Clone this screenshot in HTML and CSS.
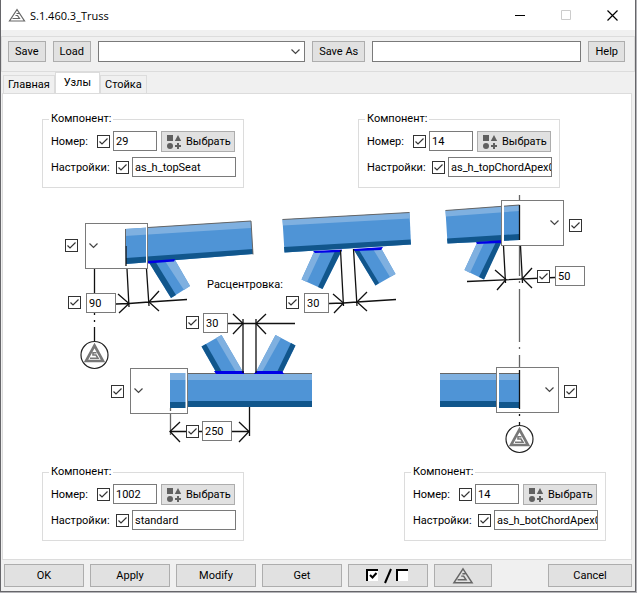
FILE: index.html
```html
<!DOCTYPE html>
<html lang="ru">

<head>
  <meta charset="UTF-8">
  <meta name="viewport" content="width=device-width, initial-scale=1.0">
  <title>S.1.460.3_Truss</title>
  <link rel="stylesheet" href="styles.css">
</head>

<body>
  <svg class="defs" aria-hidden="true">
    <symbol id="logo" viewBox="0 0 18 14">
      <path d="M9 1.5 L16.5 13 H1.5 Z M4.500 10.500 H11.5 L9.5 7.500 H7.500 M8.500 5.500 H11" fill="none" stroke="#666" stroke-width="1.2" />
    </symbol>
    <symbol id="shapes" viewBox="0 0 16 15">
      <path d="M1 1 H7 V7 H1 Z M12 1 L15.2 7 H8.8 Z M11 9 H13 V11 H15 V13 H13 V15 H11 V13 H9 V11 H11 Z" fill="#606060" />
      <circle cx="4" cy="12" r="3" fill="#606060" />
    </symbol>
    <symbol id="axis" viewBox="0 0 30 30">
      <circle cx="15" cy="15" r="13.5" fill="#fff" stroke="#222" stroke-width="1.2" />
      <path d="M15 5.5 L23.5 21 H6.5 Z" fill="none" stroke="#787878" stroke-width="2.6" />
      <path d="M10.5 18.3 H18.5 L16.5 15 H13.5 V12.8 H17" fill="none" stroke="#787878" stroke-width="1.6" />
    </symbol>
  </svg>

  <div class="window">
    <header class="titlebar">
      <svg class="title-icon"><use href="#logo" /></svg>
      <h1>S.1.460.3_Truss</h1>
      <button class="win-button" aria-label="Minimize"><svg width="11" height="11"><path d="M0 5.5 H10" stroke="#000" /></svg></button>
      <button class="win-button" aria-label="Maximize" disabled><svg width="11" height="11"><path d="M.5 .5 H9.5 V9.5 H.5 Z" fill="none" stroke="#ccc" /></svg></button>
      <button class="win-button" aria-label="Close"><svg width="11" height="11"><path d="M.5 .5 L10.5 10.5 M10.5 .5 L.5 10.5" stroke="#000" stroke-width="1.2" /></svg></button>
    </header>

    <div class="toolbar">
      <button>Save</button>
      <button>Load</button>
      <select class="combo" aria-label="Saved settings"><option></option></select>
      <button>Save As</button>
      <input type="text" class="save-name" aria-label="Save as name">
      <button>Help</button>
    </div>

    <div class="tabs" role="tablist">
      <button role="tab">Главная</button>
      <button role="tab" class="active" aria-selected="true">Узлы</button>
      <button role="tab">Стойка</button>
    </div>

    <main class="panel">
      <div class="components top">
        <fieldset>
          <legend>Компонент:</legend>
          <div class="row">
            <label class="number" for="num1">Номер:</label>
            <input type="checkbox" checked aria-label="Номер">
            <input type="text" class="short" id="num1" value="29">
            <button class="pick"><svg><use href="#shapes" /></svg>Выбрать</button>
          </div>
          <div class="row">
            <label class="settings" for="set1">Настройки:</label>
            <input type="checkbox" checked aria-label="Настройки">
            <input type="text" class="long" id="set1" value="as_h_topSeat">
          </div>
        </fieldset>
        <fieldset>
          <legend>Компонент:</legend>
          <div class="row">
            <label class="number" for="num2">Номер:</label>
            <input type="checkbox" checked aria-label="Номер">
            <input type="text" class="short" id="num2" value="14">
            <button class="pick"><svg><use href="#shapes" /></svg>Выбрать</button>
          </div>
          <div class="row">
            <label class="settings" for="set2">Настройки:</label>
            <input type="checkbox" checked aria-label="Настройки">
            <input type="text" class="long" id="set2" value="as_h_topChordApex01">
          </div>
        </fieldset>
      </div>

      <div class="diagram">
        <svg class="drawing" width="540" height="270" viewBox="60 190 540 270">
          <!-- top chord, support end -->
          <g class="steel">
            <path class="mid" d="M148 261 L171 298 L190 286 L175 260 Z" />
            <path class="light" d="M165 261 L184 290 L190 286 L175 260 Z" />
            <path class="dark" d="M148 261 L171 298 L176 295 L155 261 Z" />
            <path class="mid" d="M125 229 L251 221 L253 254 L126 264 Z" />
            <path class="light" d="M125 229 L251 221 L251 228 L125 236 Z" />
            <path class="dark" d="M126 258 L253 249 L253 254 L126 264 Z" />
            <path class="edge" d="M148 227.5 L251 221 L253 254.5" />
            <path class="weld" d="M148 261 L175 259 L174 261.5 L148 263.5 Z" />
          </g>
          <path class="gap" d="M147 224 V268" />
          <path class="edge" d="M125.500 229 V246" />
          <path class="line" d="M126 246 V266" />
          <path class="line" d="M94.500 269 V315 M94.500 320 V322 M94.500 327 V342" />
          <path class="line" d="M127 269 L129 307 M146.500 269 L149 306 M116 304 L129 303.500 L149 302 L187 299.500" />
          <path class="line" d="M118 294 L129 303.500 L119 313 M159 291 L149 302 L159 311" />
          <use href="#axis" x="79.500" y="340" width="30" height="30" />

          <!-- top chord, middle joint -->
          <g class="steel">
            <path class="mid" d="M314 252 L342 250 L322.500 289 L301.500 279.500 Z" />
            <path class="light" d="M314 252 L321 252 L307 282 L301.500 279.500 Z" />
            <path class="dark" d="M335 251 L342 250 L322.500 289 L318 287 Z" />
            <path class="mid" d="M354 250 L381.500 249 L395.500 274 L375.500 285.500 Z" />
            <path class="light" d="M373 249 L381.500 249 L395.500 274 L390 277 Z" />
            <path class="dark" d="M354 250 L359 250 L379 283 L375.500 285.500 Z" />
            <path class="mid" d="M282.500 219.500 L409.500 212.500 L411 244.500 L284.500 252.500 Z" />
            <path class="light" d="M282.500 219.500 L409.500 212.500 L410 218.500 L283 225.500 Z" />
            <path class="dark" d="M284 247 L410.500 239.500 L411 244.500 L284.500 252.500 Z" />
            <path class="edge" d="M282.500 219.500 L409.500 212.500" />
            <path class="weld" d="M313 251 L342 249.500 L341 252 L315 253 Z" />
            <path class="weld" d="M353 249 L383 247 L381 250 L355 251 Z" />
          </g>
          <path class="line" d="M340.500 250 L343.500 306 M353.500 249 L357 306 M329 303.500 L343.500 303 L357 302 L396 299.500" />
          <path class="line" d="M333 294 L343.500 303 L334 313 M367 292 L357 302 L367 311" />

          <!-- top chord, ridge -->
          <g class="steel">
            <path class="mid" d="M477 243 L501 241 L484 279.500 L464.500 270 Z" />
            <path class="light" d="M477 243 L484 243 L470 273 L464.500 270 Z" />
            <path class="dark" d="M496 242 L502 241 L484 279.500 L479 277 Z" />
            <path class="mid" d="M445.500 210.500 L519.500 205 V240 L447.500 243.500 Z" />
            <path class="light" d="M445.500 210.500 L519.500 205 V211 L446 216.500 Z" />
            <path class="dark" d="M447 238.500 L519.500 234 V240 L447.500 243.500 Z" />
            <path class="edge" d="M445.500 210.500 L519.500 205" />
            <path class="weld" d="M476 242 L504 240 L501 243 L477 244 Z" />
          </g>
          <path class="gap" d="M503 201 V245" />
          <path class="line gray" d="M519.500 195 V200 M519.500 246 V276 M519.500 281 V283 M519.500 289 V342 M519.500 347 V349 M519.500 355 V367" />
          <path class="line" d="M519.500 205 V240" />
          <path class="line" d="M503.500 246 L505.500 283 M520.500 246 L522.500 283 M467 281.500 L555 277.500" />
          <path class="line" d="M495 270 L506 279.500 L497 290 M532 268 L522.500 278.500 L532 288" />

          <!-- bottom chord, middle joint -->
          <g class="steel">
            <path class="mid" d="M201.500 346.500 L221.500 335 L243 372 H216 Z" />
            <path class="light" d="M216 338 L221.500 335 L243 372 H236 Z" />
            <path class="dark" d="M201.500 346.500 L206 344 L222 372 H216 Z" />
            <path class="mid" d="M256 372 L275.500 335 L295.500 345.500 L282.500 372 Z" />
            <path class="light" d="M256 372 L275.500 335 L281 338 L262 372 Z" />
            <path class="dark" d="M277 372 L291 343 L295.500 345.500 L282.500 372 Z" />
            <path class="mid" d="M170 373 H312 V406 H170 Z" />
            <path class="light" d="M170 373 H312 V380 H170 Z" />
            <path class="dark" d="M170 402 H187 V408 H170 Z M187 401 H312 V407 H187 Z" />
            <path class="edge" d="M188 373.500 H312" />
            <path class="weld" d="M214 371 H244 V374 H216 Z M254 374 L256 371 H282 L284 374 Z" />
          </g>
          <path class="gap" d="M186.500 369 V413" />
          <path class="line" d="M243 319 V373 M256 319 V373 M228 323.500 H295" />
          <path class="line" d="M233 314 L243 323.500 L233 334 M266 314 L256 323.500 L266 334" />
          <path class="line gray" d="M170.500 408 V411 M170.500 414 V435" />
          <path class="line" d="M249.500 407 V436 M170 431.500 H249" />
          <path class="line" d="M180 422 L170 431.500 L180 442 M239 422 L249 431.500 L239 442" />

          <!-- bottom chord, ridge -->
          <g class="steel">
            <path class="mid" d="M440 373 H519 V407 H440 Z" />
            <path class="light" d="M440 373 H519 V380 H440 Z" />
            <path class="dark" d="M440 401 H498 V407 H440 Z M498 402 H519 V408 H498 Z" />
            <path class="edge" d="M440 373.500 H519" />
          </g>
          <path class="gap" d="M498 368 V413" />
          <path class="line" d="M519.500 370 V409 M519.500 414 V416 M519.500 422 V426" />
          <use href="#axis" x="504.500" y="424" width="30" height="30" />
        </svg>

        <input type="checkbox" checked class="node seat-check" aria-label="Опорный торец">
        <select class="combo node seat" aria-label="Опорный торец"><option></option></select>
        <input type="checkbox" checked class="node seat-gap-check" aria-label="Отступ опоры">
        <input type="text" class="node seat-gap" value="90" aria-label="Отступ опоры">

        <label class="node offset-label" for="offset">Расцентровка:</label>
        <input type="checkbox" checked class="node offset-check" aria-label="Расцентровка">
        <input type="text" class="node narrow offset" id="offset" value="30">

        <select class="combo arrow-right node ridge" aria-label="Верхний конёк"><option></option></select>
        <input type="checkbox" checked class="node ridge-check" aria-label="Верхний конёк">
        <input type="checkbox" checked class="node ridge-gap-check" aria-label="Отступ конька">
        <input type="text" class="node ridge-gap" value="50" aria-label="Отступ конька">

        <input type="checkbox" checked class="node bottom-gap-check" aria-label="Зазор раскосов">
        <input type="text" class="node narrow bottom-gap" value="30" aria-label="Зазор раскосов">
        <input type="checkbox" checked class="node bottom-check" aria-label="Нижний пояс">
        <select class="combo node bottom" aria-label="Нижний пояс"><option></option></select>
        <input type="checkbox" checked class="node length-check" aria-label="Длина">
        <input type="text" class="node length" value="250" aria-label="Длина">

        <select class="combo arrow-right node bottom-ridge" aria-label="Нижний конёк"><option></option></select>
        <input type="checkbox" checked class="node bottom-ridge-check" aria-label="Нижний конёк">
      </div>

      <div class="components">
        <fieldset>
          <legend>Компонент:</legend>
          <div class="row">
            <label class="number" for="num3">Номер:</label>
            <input type="checkbox" checked aria-label="Номер">
            <input type="text" class="short" id="num3" value="1002">
            <button class="pick"><svg><use href="#shapes" /></svg>Выбрать</button>
          </div>
          <div class="row">
            <label class="settings" for="set3">Настройки:</label>
            <input type="checkbox" checked aria-label="Настройки">
            <input type="text" class="long" id="set3" value="standard">
          </div>
        </fieldset>
        <fieldset>
          <legend>Компонент:</legend>
          <div class="row">
            <label class="number" for="num4">Номер:</label>
            <input type="checkbox" checked aria-label="Номер">
            <input type="text" class="short" id="num4" value="14">
            <button class="pick"><svg><use href="#shapes" /></svg>Выбрать</button>
          </div>
          <div class="row">
            <label class="settings" for="set4">Настройки:</label>
            <input type="checkbox" checked aria-label="Настройки">
            <input type="text" class="long" id="set4" value="as_h_botChordApex01">
          </div>
        </fieldset>
      </div>
    </main>

    <footer class="footer">
      <button>OK</button>
      <button>Apply</button>
      <button>Modify</button>
      <button>Get</button>
      <button aria-label="Toggle all">
        <svg width="44" height="16">
          <path d="M1 13 V2 H12 M31 13 V2 H42" fill="none" stroke="#000" stroke-width="2" />
          <path d="M2 3 H12 V13 H2 Z M32 3 H42 V13 H32 Z" fill="#fff" />
          <path d="M4 7 L6.500 9.500 L10.500 5" fill="none" stroke="#000" stroke-width="2" />
          <path d="M19 15 L25 1" stroke="#000" stroke-width="2" />
        </svg>
      </button>
      <button class="logo-button" aria-label="Tekla"><svg width="22" height="17"><use href="#logo" /></svg></button>
      <button class="cancel">Cancel</button>
    </footer>
  </div>
</body>

</html>
```
FILE: styles.css
```css
* {
  box-sizing: border-box;
}

body {
  margin: 0;
  background-color: #b4b4b8;
  font-family: Roboto, "Liberation Sans", sans-serif;
  font-size: 11px;
  color: #000;
}

button,
input,
select {
  margin: 0;
  font: inherit;
  color: inherit;
}

button {
  height: 21px;
  padding: 0;
  background-color: #e1e1e1;
  border: 1px solid #adadad;
}

button:hover {
  background-color: #e5f1fb;
}

svg {
  display: block;
  flex: none;
}

.defs {
  position: absolute;
  width: 0;
  height: 0;
}

.window {
  display: flex;
  flex-direction: column;
  min-height: calc(100vh - 1px);
  margin-right: 1px;
  background-color: #f0f0f0;
  border: solid #66666a;
  border-width: 0 1px 1px;
}

/* title bar */
.titlebar {
  display: flex;
  align-items: center;
  height: 30px;
  padding-left: 7px;
  background-color: #fff;
}

.title-icon {
  width: 18px;
  height: 14px;
}

.titlebar h1 {
  flex: 1;
  margin: 0 0 0 4px;
  font-family: "Open Sans", sans-serif;
  font-size: 11px;
  font-weight: normal;
}

.win-button {
  display: flex;
  align-items: center;
  justify-content: center;
  width: 46px;
  height: 30px;
  background: none;
  border: none;
}

/* toolbar */
.toolbar {
  display: flex;
  align-items: center;
  gap: 7px;
  height: 36px;
  margin-top: 6px;
  padding: 0 9px 5px 6px;
  border: 1px solid #dcdcdc;
}

.toolbar button {
  padding: 0 6px;
}

.toolbar .combo,
.toolbar .save-name {
  flex: 1;
  min-width: 0;
  height: 21px;
}

input[type="text"] {
  width: 30px;
  height: 20px;
  padding: 0 0 0 2px;
  background-color: #fff;
  border: 1px solid #7a7a7a;
}

.combo {
  appearance: none;
  background: #fff url("data:image/svg+xml,%3Csvg xmlns='http://www.w3.org/2000/svg' width='9' height='6'%3E%3Cpath d='M.5 .5 L4.500 4.500 L8.500 .5' fill='none' stroke='%23444' stroke-width='1.2'/%3E%3C/svg%3E") no-repeat right 4px center;
  border: 1px solid #7a7a7a;
  border-radius: 0;
}

input[type="checkbox"] {
  flex: none;
  appearance: none;
  width: 13px;
  height: 13px;
  background-color: #fff;
  border: 1px solid #333;
}

input[type="checkbox"]:checked {
  background-image: url("data:image/svg+xml,%3Csvg xmlns='http://www.w3.org/2000/svg' width='11' height='11'%3E%3Cpath d='M1.500 5.500 L4 8 L9.500 2.500' fill='none' stroke='%23333' stroke-width='1.2'/%3E%3C/svg%3E");
}

/* tabs */
.tabs {
  display: flex;
  align-items: flex-end;
  height: 21px;
  padding-left: 2px;
}

.tabs button {
  height: 18px;
  padding: 0 4px;
  background-color: #f0f0f0;
  border: 1px solid #dcdcdc;
  border-bottom: none;
}

.tabs .active {
  height: 21px;
  padding: 0 8px 2px;
  background-color: #fff;
}

.panel {
  flex: 1;
  margin: 0 3px 0 1px;
  padding: 18px 25px 12px 39px;
  background-color: #fff;
  border: 1px solid #dcdcdc;
}

/* component groups */
.components {
  display: flex;
  justify-content: space-between;
}

.components.top {
  padding-right: 46px;
}

fieldset {
  width: 202px;
  height: 76px;
  margin: 0;
  padding: 2px 7px 0 8px;
  border: 1px solid #dcdcdc;
}

legend {
  padding: 0 2px;
  margin-left: -2px;
  line-height: 14px;
}

.row {
  display: flex;
  align-items: center;
  gap: 3px;
  height: 26px;
}

.row .number {
  width: 43px;
}

.row .settings {
  width: 62px;
}

.row .short {
  width: 44px;
}

.row .long {
  width: 104px;
}

.pick {
  display: flex;
  align-items: center;
  gap: 4px;
  width: 74px;
  margin-left: 1px;
  padding: 0 4px;
}

.pick svg {
  width: 16px;
  height: 15px;
}

/* node diagram: controls are pinned on the drawing */
.diagram {
  position: relative;
  width: 540px;
  height: 270px;
  margin: 2px 0 5px 18px;
}

.steel .mid { fill: #4f94d6; }
.steel .light { fill: #7fb0e0; }
.steel .dark { fill: #11568c; }
.steel .weld { fill: #0000e6; }

.edge {
  fill: none;
  stroke: #666;
}

.line {
  fill: none;
  stroke: #111;
  stroke-width: 1.3;
}

.line.gray {
  stroke: #666;
}

.gap {
  stroke: #fff;
  stroke-width: 2;
}

.node {
  position: absolute;
}

.diagram .combo {
  width: 63px;
  height: 46px;
  background-color: transparent;
  background-position: left 3px center;
}

.diagram .arrow-right {
  background-position: right 4px center;
}

.diagram .narrow {
  width: 25px;
}

.seat-check { left: 5px; top: 49px; }
.seat { left: 25px; top: 33px; }
.seat-gap-check { left: 8px; top: 106px; }
.seat-gap { left: 26px; top: 103px; }
.offset-label { left: 147px; top: 88px; }
.offset-check { left: 226px; top: 106px; }
.offset { left: 244px; top: 103px; }
.ridge { left: 441px; top: 10px; }
.ridge-check { left: 509px; top: 29px; }
.ridge-gap-check { left: 477px; top: 80px; }
.ridge-gap { left: 495px; top: 76px; }
.bottom-gap-check { left: 126px; top: 126px; }
.bottom-gap { left: 143px; top: 123px; }
.bottom-check { left: 51px; top: 195px; }
.diagram .bottom { left: 70px; top: 178px; width: 58px; }
.length-check { left: 126px; top: 235px; }
.length { left: 142px; top: 231px; }
.bottom-ridge { left: 436px; top: 177px; }
.bottom-ridge-check { left: 504px; top: 195px; }

/* footer */
.footer {
  display: flex;
  gap: 6px;
  padding: 4px 3px;
}

.footer button {
  display: flex;
  align-items: center;
  justify-content: center;
  flex: 0 1 80px;
  height: 23px;
}

.footer .logo-button {
  flex-basis: 58px;
}

.footer .cancel {
  flex-basis: 84px;
  margin-left: auto;
}
```
